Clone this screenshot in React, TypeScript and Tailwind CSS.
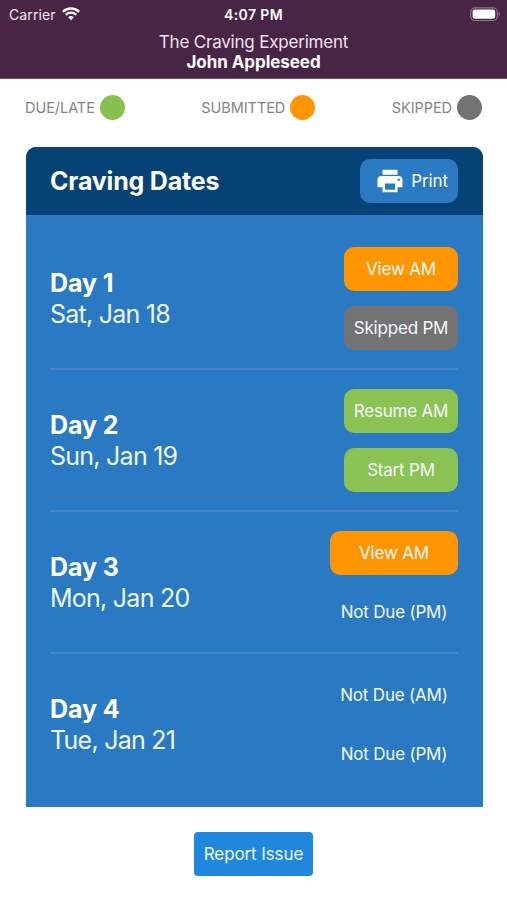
import { MdPrint } from "react-icons/md";

const legend = [
  { label: "DUE/LATE", dot: "bg-[#87c251]" },
  { label: "SUBMITTED", dot: "bg-[#ff9500]" },
  { label: "SKIPPED", dot: "bg-[#737373]" },
];

const statusStyles = {
  submitted: "bg-[#ff9500]",
  skipped: "bg-[#737373]",
  due: "bg-[#8ac353]",
  none: "",
};

type Status = keyof typeof statusStyles;

type Day = {
  title: string;
  date: string;
  width: string;
  entries: { label: string; status: Status }[];
};

const days: Day[] = [
  {
    title: "Day 1",
    date: "Sat, Jan 18",
    width: "w-[114px]",
    entries: [
      { label: "View AM", status: "submitted" },
      { label: "Skipped PM", status: "skipped" },
    ],
  },
  {
    title: "Day 2",
    date: "Sun, Jan 19",
    width: "w-[114px]",
    entries: [
      { label: "Resume AM", status: "due" },
      { label: "Start PM", status: "due" },
    ],
  },
  {
    title: "Day 3",
    date: "Mon, Jan 20",
    width: "w-32",
    entries: [
      { label: "View AM", status: "submitted" },
      { label: "Not Due (PM)", status: "none" },
    ],
  },
  {
    title: "Day 4",
    date: "Tue, Jan 21",
    width: "w-32",
    entries: [
      { label: "Not Due (AM)", status: "none" },
      { label: "Not Due (PM)", status: "none" },
    ],
  },
];

const WifiIcon = () => (
  <svg viewBox="0 0 18 14" className="w-[18px] h-3.5" fill="none">
    <path d="M0.9 4.9C5.4 0.4 12.6 0.4 17.1 4.9" stroke="white" strokeWidth="2.5" />
    <path d="M3.7 7.8C6.7 5 11.3 5 14.3 7.8" stroke="white" strokeWidth="2.3" />
    <path d="M6.1 10.2C7.7 8.7 10.3 8.7 11.9 10.2L9 13.2Z" fill="white" />
  </svg>
);

const BatteryIcon = () => (
  <svg viewBox="0 0 31 15" className="w-[31px] h-[15px]" fill="none">
    <rect x="0.7" y="0.9" width="26.6" height="12.6" rx="4" stroke="#8b7588" strokeWidth="1.2" />
    <rect x="2.6" y="2.6" width="22.6" height="9.2" rx="2.2" fill="white" />
    <path d="M28.7 5.1C30.6 5.8 30.6 8.6 28.7 9.3Z" fill="#8b7588" />
  </svg>
);

const Header = () => (
  <header className="h-[79px] bg-[#482544] border-b border-[#6f546c] text-white">
    <div className="grid grid-cols-3 items-center h-7 px-[6px]">
      <div className="flex items-center gap-1.5 pl-[3px] text-[14px] tracking-[0.1px] text-[#f1e8f0]">
        Carrier
        <WifiIcon />
      </div>
      <div className="text-center text-[14px] font-semibold tracking-[0.4px] whitespace-nowrap">
        4:07 PM
      </div>
      <div className="flex justify-end">
        <BatteryIcon />
      </div>
    </div>
    <div className="pt-1 text-center leading-[21px]">
      <p className="text-[17px] text-[#f1e3f0] tracking-[-0.2px]">The Craving Experiment</p>
      <p className="-mt-px text-[17px] font-bold tracking-[-0.05px]">John Appleseed</p>
    </div>
  </header>
);

const Legend = () => (
  <div className="flex justify-between items-center h-14 px-[25px]">
    {legend.map((item) => (
      <div key={item.label} className="flex items-center gap-[5px]">
        <span className="pt-px text-[14.5px] tracking-[-0.05px] text-[#848484]">{item.label}</span>
        <span className={`size-[25px] rounded-full ${item.dot}`} />
      </div>
    ))}
  </div>
);

const DayRow = ({ day }: { day: Day }) => (
  <div className="flex justify-between items-center h-[142px] border-b-2 border-[#4286c5] last:border-transparent">
    <div className="pt-0.5 text-[25px] leading-[31px]">
      <h3 className="font-bold tracking-[-0.1px]">{day.title}</h3>
      <p className="tracking-[-0.75px] text-[#eff8ff]">{day.date}</p>
    </div>
    <div className={`flex flex-col gap-[15px] ${day.width}`}>
      {day.entries.map((entry) => (
        <div
          key={entry.label}
          className={`flex items-center justify-center h-11 pt-0.5 rounded-[10px] text-[17px] tracking-[-0.2px] whitespace-nowrap text-[#f5faff] ${statusStyles[entry.status]}`}
        >
          {entry.label}
        </div>
      ))}
    </div>
  </div>
);

export default function App() {
  return (
    <div className="h-[900px] bg-white font-['Inter',sans-serif]">
      <Header />
      <Legend />

      <section className="mt-3 ml-[25.5px] w-[457px] h-[660px] rounded-t-[10px] overflow-hidden bg-[#2979c3] text-white">
        <div className="flex items-center justify-between h-[68px] px-[24.5px] pb-px bg-[#054276]">
          <h2 className="pt-0.5 text-[25px] font-bold tracking-[-0.2px]">Craving Dates</h2>
          <button className="flex items-center justify-end gap-1.5 w-[98px] h-11 pr-2.5 rounded-[10px] bg-[#2979c3] text-[17px] tracking-[-0.1px]">
            <MdPrint className="size-[30px]" />
            <span className="pt-0.5">Print</span>
          </button>
        </div>
        <div className="pt-[13px] px-[24.5px]">
          {days.map((day) => (
            <DayRow key={day.title} day={day} />
          ))}
        </div>
      </section>

      <div className="flex justify-center pt-[25px]">
        <button className="w-[119px] h-11 pt-0.5 rounded-[4px] bg-[#2088dc] text-[#eff8ff] text-[17px] tracking-[-0.1px] whitespace-nowrap">
          Report Issue
        </button>
      </div>
    </div>
  );
}
